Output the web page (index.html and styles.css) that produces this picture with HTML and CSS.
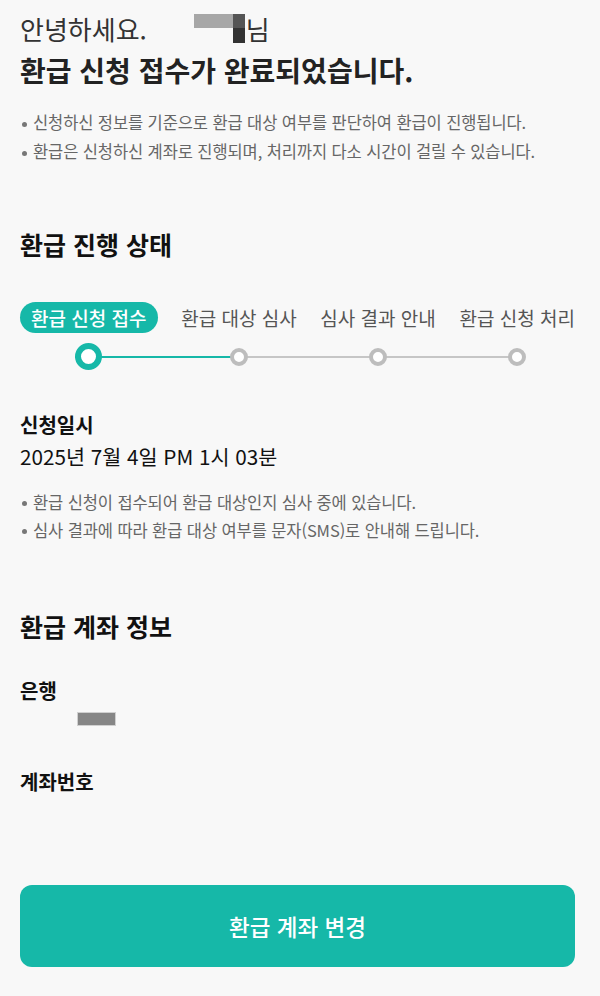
FILE: index.html
```html
<!DOCTYPE html>
<html lang="ko">
<head>
  <meta charset="UTF-8">
  <title>환급 신청 접수 완료</title>
  <link rel="stylesheet" href="styles.css">
</head>
<body>

<div class="page">
  <p class="greeting">안녕하세요.<span class="mask"><i class="m-light"></i><i class="m-dark"></i><i></i><i class="m-darker"></i></span>님</p>
  <h1 class="title">환급 신청 접수가 완료되었습니다.</h1>

  <ul class="notes notes-top">
    <li>신청하신 정보를 기준으로 환급 대상 여부를 판단하여 환급이 진행됩니다.</li>
    <li>환급은 신청하신 계좌로 진행되며, 처리까지 다소 시간이 걸릴 수 있습니다.</li>
  </ul>

  <h2 class="section-title status-title">환급 진행 상태</h2>

  <div class="stepper">
    <div class="track"><div class="track-done"></div></div>
    <div class="step active">
      <span class="step-label">환급 신청 접수</span>
      <span class="dot"></span>
    </div>
    <div class="step">
      <span class="step-label">환급 대상 심사</span>
      <span class="dot"></span>
    </div>
    <div class="step">
      <span class="step-label">심사 결과 안내</span>
      <span class="dot"></span>
    </div>
    <div class="step">
      <span class="step-label">환급 신청 처리</span>
      <span class="dot"></span>
    </div>
  </div>

  <h3 class="field-label date-label">신청일시</h3>
  <p class="date-value">2025년 7월 4일 PM 1시 03분</p>

  <ul class="notes notes-status">
    <li>환급 신청이 접수되어 환급 대상인지 심사 중에 있습니다.</li>
    <li>심사 결과에 따라 환급 대상 여부를 문자(SMS)로 안내해 드립니다.</li>
  </ul>

  <h2 class="section-title account-title">환급 계좌 정보</h2>

  <h3 class="field-label bank-label">은행</h3>
  <div class="bank-mask"></div>

  <h3 class="field-label account-label">계좌번호</h3>

  <button class="change-btn">환급 계좌 변경</button>
</div>

</body>
</html>
```

FILE: styles.css
```css
* {
  box-sizing: border-box;
  margin: 0;
  padding: 0;
  font-family: "Noto Sans CJK KR", "Noto Sans", sans-serif;
}

body {
  background: #f8f8f8;
  color: #111;
}

.page {
  padding: 12px 25px 0 20px;
}

.greeting {
  font-size: 26px;
  line-height: 34px;
  color: #333;
}

.mask {
  display: inline-grid;
  grid-template-columns: 39px 12px;
  grid-template-rows: 14px 15px;
  vertical-align: top;
  margin: 2px 1px 0 47px;
}

.mask i {
  display: block;
}

.m-light { background: #a7a7a7; }
.m-dark { background: #555; }
.m-darker { background: #333; }

.title {
  margin-top: 6px;
  font-size: 28px;
  line-height: 36px;
  font-weight: 700;
  color: #222;
}

.notes {
  list-style: none;
}

.notes li {
  position: relative;
  padding-left: 13px;
  font-size: 16.5px;
  letter-spacing: -0.1px;
  color: #666;
}

.notes li::before {
  content: "";
  position: absolute;
  left: 2px;
  top: 50%;
  width: 5px;
  height: 5px;
  margin-top: -1px;
  border-radius: 50%;
  background: #777;
}

.notes-top {
  margin-top: 20px;
}

.notes-top li {
  line-height: 29px;
}

.section-title {
  font-size: 25px;
  line-height: 32px;
  font-weight: 700;
  color: #111;
}

.status-title {
  margin-top: 62px;
}

/* Stepper */
.stepper {
  position: relative;
  display: flex;
  justify-content: space-between;
  margin-top: 42px;
}

.step {
  display: flex;
  flex-direction: column;
  align-items: center;
  position: relative;
  z-index: 1;
}

.step-label {
  height: 31px;
  line-height: 31px;
  font-size: 19px;
  color: #555;
}

.step.active .step-label {
  padding: 0 11px;
  border-radius: 16px;
  background: #16b8a8;
  color: #fff;
  font-weight: 500;
}

.dot {
  display: block;
  width: 18px;
  height: 18px;
  margin: 15px 0 4px;
  border: 4px solid #bdbdbd;
  border-radius: 50%;
  background: #fff;
}

.step.active .dot {
  width: 27px;
  height: 27px;
  margin: 10px 0 0;
  border: 6.5px solid #16b8a8;
}

.track {
  position: absolute;
  left: 55px;
  right: 56px;
  top: 54px;
  height: 2px;
  background: #c6c6c6;
}

.track-done {
  width: 165px;
  height: 2px;
  background: #16b8a8;
}

.field-label {
  font-size: 20px;
  line-height: 26px;
  font-weight: 700;
  color: #111;
}

.date-label {
  margin-top: 42px;
}

.date-value {
  margin-top: 3px;
  font-size: 20.7px;
  line-height: 30px;
  color: #111;
}

.notes-status {
  margin-top: 17px;
}

.notes-status li {
  line-height: 28px;
}

.account-title {
  margin-top: 66px;
}

.bank-label {
  margin-top: 36px;
}

.bank-mask {
  width: 39px;
  height: 14px;
  margin: 8px 0 0 57px;
  background: #868686;
  border: 1px solid #d0d0d0;
}

.account-label {
  margin-top: 43px;
}

.change-btn {
  display: block;
  width: 100%;
  height: 82px;
  margin-top: 90px;
  border: none;
  border-radius: 12px;
  background: #16b8a8;
  color: #fff;
  font-size: 22.5px;
  font-weight: 500;
  cursor: pointer;
}
```
